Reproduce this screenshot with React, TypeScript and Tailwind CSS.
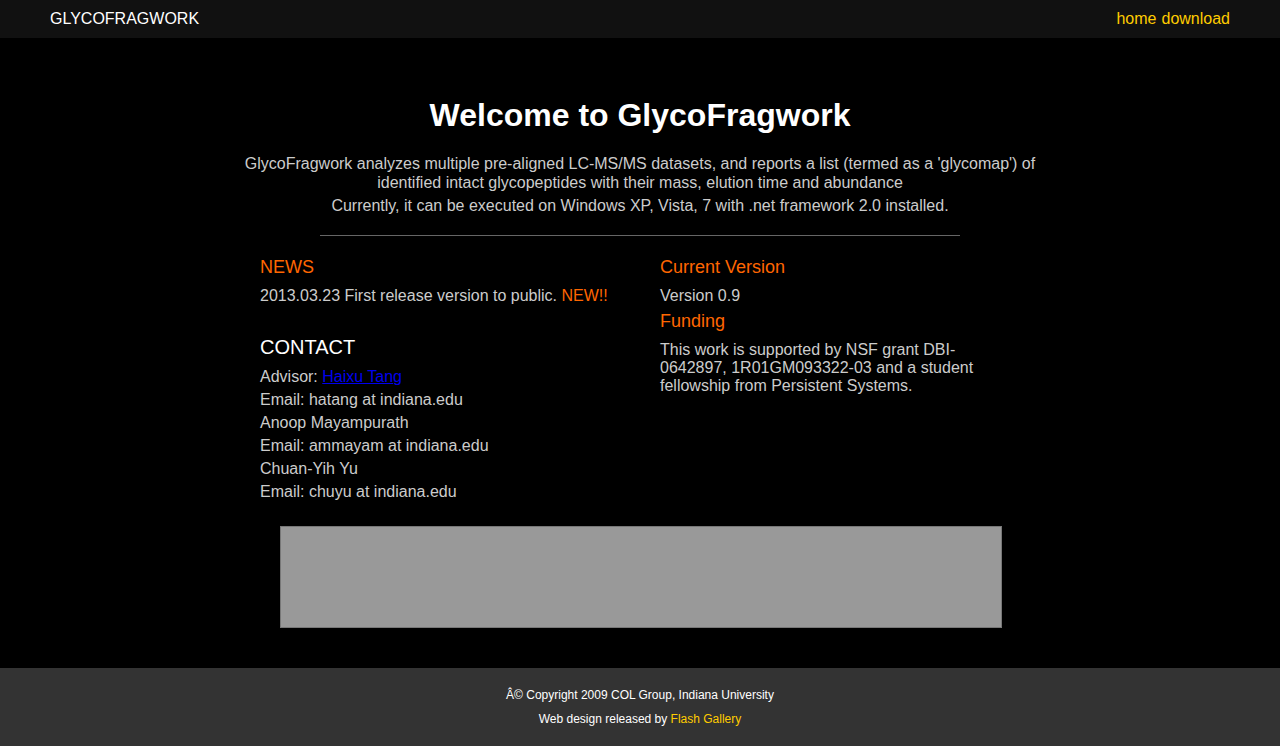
const contacts = [
  "Email: hatang at indiana.edu",
  "Anoop Mayampurath",
  "Email: ammayam at indiana.edu",
  "Chuan-Yih Yu",
  "Email: chuyu at indiana.edu",
];

const App = () => {
  return (
    <div className="min-h-screen bg-black font-['Liberation_Sans',Arial,sans-serif] text-[#cccccc]">
      {/* top bar */}
      <div className="h-[38px] bg-[#111111] flex items-center justify-between px-[50px] text-[16px]">
        <span className="text-white">GLYCOFRAGWORK</span>
        <div className="flex gap-[5px] text-[#ffcc00]">
          <a href="#">home</a>
          <a href="#">download</a>
        </div>
      </div>

      <div className="w-[800px] mx-auto pt-[57px]">
        <h1 className="text-white text-[32px] leading-[40px] font-bold text-center">
          Welcome to GlycoFragwork
        </h1>
        <p className="mt-[19px] text-[16px] leading-[19px] text-center">
          GlycoFragwork analyzes multiple pre-aligned LC-MS/MS datasets, and reports a list (termed as a
          'glycomap') of identified intact glycopeptides with their mass, elution time and abundance
        </p>
        <p className="mt-[4px] text-[16px] leading-[19px] text-center">
          Currently, it can be executed on Windows XP, Vista, 7 with .net framework 2.0 installed.
        </p>
        <hr className="w-[640px] mx-auto mt-[20px] border-0 border-t border-[#666666]" />

        <div className="flex px-5 mt-[20px] text-[16px]">
          <div className="w-[400px]">
            <h3 className="text-[#ff6600] text-[18px] leading-[22px]">NEWS</h3>
            <p className="mt-[6px] leading-[23px]">
              2013.03.23 First release version to public. <span className="text-[#ff6600]">NEW!!</span>
            </p>
            <h3 className="mt-[28px] text-white text-[20px] leading-[24px]">CONTACT</h3>
            <div className="mt-[6px] leading-[23px]">
              <div>
                Advisor:{" "}
                <a href="#" className="text-[#0000ee] underline">
                  Haixu Tang
                </a>
              </div>
              {contacts.map((line) => (
                <div key={line}>{line}</div>
              ))}
            </div>
          </div>
          <div className="w-[340px]">
            <h3 className="text-[#ff6600] text-[18px] leading-[22px]">Current Version</h3>
            <p className="mt-[6px] leading-[23px]">Version 0.9</p>
            <h3 className="mt-[3px] text-[#ff6600] text-[18px] leading-[22px]">Funding</h3>
            <p className="mt-[9px] leading-[18px]">
              This work is supported by NSF grant DBI-0642897, 1R01GM093322-03 and a student fellowship
              from Persistent Systems.
            </p>
          </div>
        </div>

        <div className="mt-[23px] ml-[40px] w-[722px] h-[102px] bg-[#999999] border border-[#777777]" />
      </div>

      <div className="mt-[40px] bg-[#333333] h-[78px] pt-[15px] text-white text-[12px] leading-[24px] text-center">
        <p>Â© Copyright 2009 COL Group, Indiana University</p>
        <p>
          Web design released by <a href="#" className="text-[#ffcc00]">Flash Gallery</a>
        </p>
      </div>
    </div>
  );
};

export default App;
